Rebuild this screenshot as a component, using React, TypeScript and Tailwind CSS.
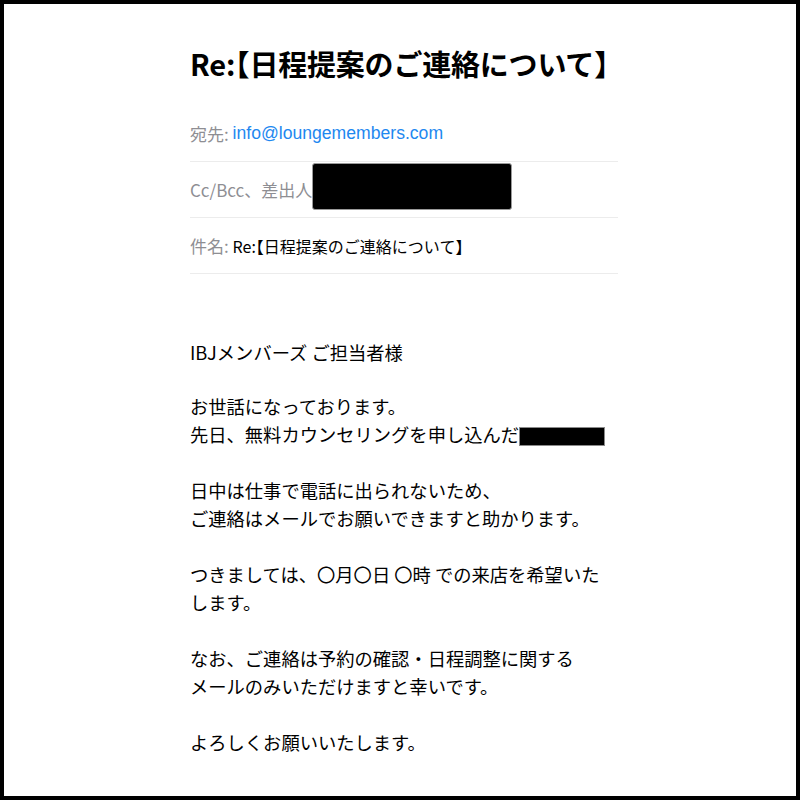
import React from "react";

const font = { fontFamily: '"Noto Sans CJK JP", "Liberation Sans", sans-serif' };

export default function App() {
  return (
    <div className="w-[800px] h-[800px] bg-black p-[4px]" style={font}>
      <div className="w-full h-full bg-white overflow-hidden">
        <div className="ml-[186px] w-[428px]">
          <div className="pt-[39px] h-[79px]">
            <h1 className="text-[29px] leading-[40px] font-bold text-black whitespace-nowrap tracking-[-0.2px]">
              Re:<span className="[font-feature-settings:'halt']">【</span>日程提案のご連絡について<span className="[font-feature-settings:'halt']">】</span>
            </h1>
          </div>
          <div className="mt-[23px]">
            <div className="h-[56px] flex items-center border-b border-[#ececec] text-[17px] whitespace-nowrap">
              <span className="text-[#8e8e93]">宛先:&nbsp;</span>
              <span className="text-[#1e88f0] text-[17.6px]" style={{ fontFamily: '"Liberation Sans", sans-serif' }}>info@loungemembers.com</span>
            </div>
            <div className="h-[56px] flex items-center border-b border-[#ececec] text-[17px] whitespace-nowrap">
              <span className="text-[#8e8e93]">Cc/Bcc、差出人</span>
              <span className="self-start mt-[1px] inline-block w-[200px] h-[47px] bg-black border border-[#9a9a9a] rounded-[3px]"></span>
            </div>
            <div className="h-[56px] flex items-center border-b border-[#ececec] text-[17px] whitespace-nowrap">
              <span className="text-[#8e8e93]">件名:&nbsp;</span>
              <span className="text-black text-[16px]">
                Re:<span className="[font-feature-settings:'halt']">【</span>日程提案のご連絡について<span className="[font-feature-settings:'halt']">】</span>
              </span>
            </div>
          </div>
          <div className="mt-[64px] text-[18.3px] leading-[28px] text-black whitespace-nowrap">
            <p>IBJメンバーズ ご担当者様</p>
            <p className="mt-[26px]">
              お世話になっております。
              <br />
              先日、無料カウンセリングを申し込んだ
              <span className="inline-block align-middle w-[86px] h-[19px] bg-black border border-[#8a8a8a] -mt-[2px]"></span>
            </p>
            <p className="mt-[28px]">
              日中は仕事で電話に出られないため、
              <br />
              ご連絡はメールでお願いできますと助かります。
            </p>
            <p className="mt-[28px]">
              つきましては、〇月〇日 〇時 での来店を希望いた
              <br />
              します。
            </p>
            <p className="mt-[28px]">
              なお、ご連絡は予約の確認・日程調整に関する
              <br />
              メールのみいただけますと幸いです。
            </p>
            <p className="mt-[28px]">よろしくお願いいたします。</p>
          </div>
        </div>
      </div>
    </div>
  );
}
